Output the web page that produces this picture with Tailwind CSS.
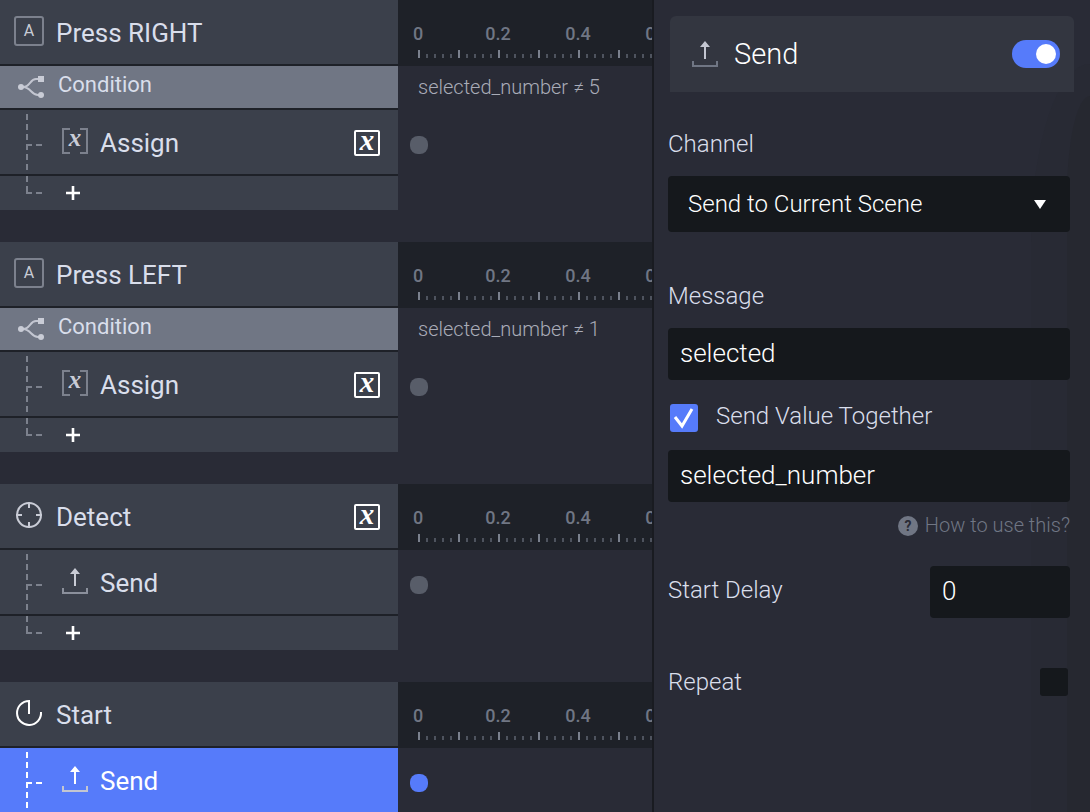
<!DOCTYPE html>
<html lang="en">
<head>
    <meta charset="UTF-8">
    <meta name="viewport" content="width=device-width, initial-scale=1.0">
    <title>Interaction Editor</title>
    <script src="https://cdn.jsdelivr.net/npm/@tailwindcss/browser@4"></script>
</head>
<body class="bg-[#292b36] font-['Roboto',sans-serif] text-[#d9deeb]">

    <!-- shared icons -->
    <svg class="hidden">
        <symbol id="icon-key" viewBox="0 0 30 34">
            <rect x="1" y="1" width="28" height="28" rx="2" fill="none" stroke="#7c818d" stroke-width="2"/>
            <text x="15" y="20" text-anchor="middle" font-size="16" fill="#c9ccd6">A</text>
        </symbol>
        <symbol id="icon-detect" viewBox="0 0 30 34">
            <g fill="none" stroke="#c9ccd6" stroke-width="2">
                <circle cx="15" cy="15" r="12"/>
                <path d="M15 2v6M15 22v6M2 15h6M22 15h6"/>
            </g>
        </symbol>
        <symbol id="icon-start" viewBox="0 0 30 34">
            <path d="M27 14A12 12 0 1 1 15 3V16" fill="none" stroke="#fff" stroke-width="2"/>
        </symbol>
        <symbol id="icon-condition" viewBox="0 0 26 22">
            <path d="M3 11h2c7 0 7-8 13-8h4M3 11h2c8 0 8 8 15 8h3" fill="none" stroke="#c3c6d1" stroke-width="2"/>
            <circle cx="3" cy="11" r="3" fill="#c9ccd6"/>
            <rect x="20" y="0" width="6" height="6" fill="#c9ccd6"/>
            <circle cx="23" cy="19" r="3" fill="#c9ccd6"/>
        </symbol>
        <symbol id="icon-assign" viewBox="0 0 26 30">
            <path d="M8 1H1v24h7M18 1h7v24h-7" fill="none" stroke="#7c818d" stroke-width="2"/>
            <text x="13" y="18" text-anchor="middle" font-family="Liberation Serif, serif" font-style="italic" font-weight="700" font-size="25" fill="#c9ccd6">x</text>
        </symbol>
        <symbol id="icon-send" viewBox="0 0 26 30">
            <path d="M13 0l5 6h-4v12h-2V6H8z" fill="currentColor"/>
            <path d="M1 20v5h24v-5" fill="none" stroke="var(--tray)" stroke-width="2"/>
        </symbol>
        <symbol id="icon-var" viewBox="0 0 26 26">
            <rect x="1" y="1" width="24" height="24" rx="1" fill="none" stroke="#fff" stroke-width="2"/>
            <text x="13" y="20" text-anchor="middle" font-family="Liberation Serif, serif" font-style="italic" font-weight="700" font-size="29" fill="#fff">x</text>
        </symbol>
        <symbol id="icon-plus" viewBox="0 0 14 14">
            <path d="M7 0v14M0 7h14" stroke="#fff" stroke-width="2.6"/>
        </symbol>
        <symbol id="tree-branch" viewBox="0 0 16 64">
            <path d="M1 4V60" stroke="currentColor" stroke-width="2" stroke-dasharray="6 4"/>
            <path d="M1 35h5M10 35h6" stroke="currentColor" stroke-width="2"/>
        </symbol>
        <symbol id="tree-end" viewBox="0 0 16 34">
            <path d="M1 0v6M1 10v7h5M10 17h6" fill="none" stroke="currentColor" stroke-width="2"/>
        </symbol>
    </svg>
    <!-- a pattern does not paint from a display:none svg, so it has its own -->
    <svg class="absolute size-0">
        <pattern id="ticks" width="40" height="8" patternUnits="userSpaceOnUse">
            <path d="M1 0v8" stroke="#7b818e" stroke-width="2"/>
            <path d="M9 4v4M17 4v4M25 4v4M33 4v4" stroke="#4e535e" stroke-width="2"/>
        </pattern>
    </svg>

    <div class="flex min-h-screen">

        <!-- triggers and timeline -->
        <main class="flex min-w-0 flex-1 flex-col gap-8 overflow-hidden">

            <section>
                <div class="flex">
                    <div class="flex h-[66px] w-[398px] shrink-0 items-center border-b-2 border-[#1e2128] bg-[#3b404b] pt-[2px] pr-[18px] pl-[14px]">
                        <svg class="h-[34px] w-[30px]"><use href="#icon-key"/></svg>
                        <h2 class="ml-3 flex-1 text-[26px]">Press RIGHT</h2>
                    </div>
                    <div class="flex min-w-0 flex-1 flex-col overflow-hidden bg-[#1e2128] pt-[22px]">
                        <div class="flex text-center text-[18px] leading-6 font-medium text-[#707684]">
                            <span class="w-10 shrink-0">0</span><span class="ml-5 w-20 shrink-0">0.2</span><span class="w-20 shrink-0">0.4</span><span class="w-20 shrink-0">0.6</span>
                        </div>
                        <svg class="mt-1 ml-5 h-2 w-full"><rect width="100%" height="8" fill="url(#ticks)"/></svg>
                    </div>
                </div>
                <div class="flex">
                    <div class="flex h-11 w-[398px] shrink-0 items-center border-b-2 border-[#1e2128] bg-[#707684] pl-[18px]">
                        <svg class="h-[22px] w-[26px]"><use href="#icon-condition"/></svg>
                        <h3 class="ml-[14px] pb-[6px] text-[22px]">Condition</h3>
                    </div>
                    <p class="flex h-11 flex-1 items-center pb-[2px] pl-5 text-[20px] font-light whitespace-nowrap text-[#a9acb8]">selected_number ≠ 5</p>
                </div>
                <div class="flex">
                    <div class="flex h-[66px] w-[398px] shrink-0 items-center border-b-2 border-[#1e2128] bg-[#3b404b] pr-[18px] pl-[26px]">
                        <svg class="h-16 w-4 text-[#7c818d]"><use href="#tree-branch"/></svg>
                        <svg class="mt-[2px] ml-5 h-[30px] w-[26px]"><use href="#icon-assign"/></svg>
                        <span class="mt-[2px] ml-3 flex-1 text-[26px]">Assign</span>
                        <svg class="mt-[2px] size-[26px]"><use href="#icon-var"/></svg>
                    </div>
                    <div class="flex flex-1 items-center pt-1 pl-3"><i class="size-[18px] rounded-[8px] bg-[#585d69]"></i></div>
                </div>
                <div class="flex h-[34px] w-[398px] items-center bg-[#3b404b] pl-[26px]">
                    <svg class="h-[34px] w-4 text-[#7c818d]"><use href="#tree-end"/></svg>
                    <button type="button" aria-label="Add action" class="ml-6"><svg class="size-[14px]"><use href="#icon-plus"/></svg></button>
                </div>
            </section>

            <section>
                <div class="flex">
                    <div class="flex h-[66px] w-[398px] shrink-0 items-center border-b-2 border-[#1e2128] bg-[#3b404b] pt-[2px] pr-[18px] pl-[14px]">
                        <svg class="h-[34px] w-[30px]"><use href="#icon-key"/></svg>
                        <h2 class="ml-3 flex-1 text-[26px]">Press LEFT</h2>
                    </div>
                    <div class="flex min-w-0 flex-1 flex-col overflow-hidden bg-[#1e2128] pt-[22px]">
                        <div class="flex text-center text-[18px] leading-6 font-medium text-[#707684]">
                            <span class="w-10 shrink-0">0</span><span class="ml-5 w-20 shrink-0">0.2</span><span class="w-20 shrink-0">0.4</span><span class="w-20 shrink-0">0.6</span>
                        </div>
                        <svg class="mt-1 ml-5 h-2 w-full"><rect width="100%" height="8" fill="url(#ticks)"/></svg>
                    </div>
                </div>
                <div class="flex">
                    <div class="flex h-11 w-[398px] shrink-0 items-center border-b-2 border-[#1e2128] bg-[#707684] pl-[18px]">
                        <svg class="h-[22px] w-[26px]"><use href="#icon-condition"/></svg>
                        <h3 class="ml-[14px] pb-[6px] text-[22px]">Condition</h3>
                    </div>
                    <p class="flex h-11 flex-1 items-center pb-[2px] pl-5 text-[20px] font-light whitespace-nowrap text-[#a9acb8]">selected_number ≠ 1</p>
                </div>
                <div class="flex">
                    <div class="flex h-[66px] w-[398px] shrink-0 items-center border-b-2 border-[#1e2128] bg-[#3b404b] pr-[18px] pl-[26px]">
                        <svg class="h-16 w-4 text-[#7c818d]"><use href="#tree-branch"/></svg>
                        <svg class="mt-[2px] ml-5 h-[30px] w-[26px]"><use href="#icon-assign"/></svg>
                        <span class="mt-[2px] ml-3 flex-1 text-[26px]">Assign</span>
                        <svg class="mt-[2px] size-[26px]"><use href="#icon-var"/></svg>
                    </div>
                    <div class="flex flex-1 items-center pt-1 pl-3"><i class="size-[18px] rounded-[8px] bg-[#585d69]"></i></div>
                </div>
                <div class="flex h-[34px] w-[398px] items-center bg-[#3b404b] pl-[26px]">
                    <svg class="h-[34px] w-4 text-[#7c818d]"><use href="#tree-end"/></svg>
                    <button type="button" aria-label="Add action" class="ml-6"><svg class="size-[14px]"><use href="#icon-plus"/></svg></button>
                </div>
            </section>

            <section>
                <div class="flex">
                    <div class="flex h-[66px] w-[398px] shrink-0 items-center border-b-2 border-[#1e2128] bg-[#3b404b] pt-[2px] pr-[18px] pl-[14px]">
                        <svg class="h-[34px] w-[30px]"><use href="#icon-detect"/></svg>
                        <h2 class="ml-3 flex-1 text-[26px]">Detect</h2>
                        <svg class="size-[26px]"><use href="#icon-var"/></svg>
                    </div>
                    <div class="flex min-w-0 flex-1 flex-col overflow-hidden bg-[#1e2128] pt-[22px]">
                        <div class="flex text-center text-[18px] leading-6 font-medium text-[#707684]">
                            <span class="w-10 shrink-0">0</span><span class="ml-5 w-20 shrink-0">0.2</span><span class="w-20 shrink-0">0.4</span><span class="w-20 shrink-0">0.6</span>
                        </div>
                        <svg class="mt-1 ml-5 h-2 w-full"><rect width="100%" height="8" fill="url(#ticks)"/></svg>
                    </div>
                </div>
                <div class="flex">
                    <div class="flex h-[66px] w-[398px] shrink-0 items-center border-b-2 border-[#1e2128] bg-[#3b404b] pr-[18px] pl-[26px]">
                        <svg class="h-16 w-4 text-[#7c818d]"><use href="#tree-branch"/></svg>
                        <svg class="mt-[2px] ml-5 h-[30px] w-[26px] text-[#c9ccd6] [--tray:#8b909c]"><use href="#icon-send"/></svg>
                        <span class="mt-[2px] ml-3 flex-1 text-[26px]">Send</span>
                    </div>
                    <div class="flex flex-1 items-center pt-1 pl-3"><i class="size-[18px] rounded-[8px] bg-[#585d69]"></i></div>
                </div>
                <div class="flex h-[34px] w-[398px] items-center bg-[#3b404b] pl-[26px]">
                    <svg class="h-[34px] w-4 text-[#7c818d]"><use href="#tree-end"/></svg>
                    <button type="button" aria-label="Add action" class="ml-6"><svg class="size-[14px]"><use href="#icon-plus"/></svg></button>
                </div>
            </section>

            <section>
                <div class="flex">
                    <div class="flex h-[66px] w-[398px] shrink-0 items-center border-b-2 border-[#1e2128] bg-[#3b404b] pt-[2px] pr-[18px] pl-[14px]">
                        <svg class="h-[34px] w-[30px]"><use href="#icon-start"/></svg>
                        <h2 class="ml-3 flex-1 text-[26px]">Start</h2>
                    </div>
                    <div class="flex min-w-0 flex-1 flex-col overflow-hidden bg-[#1e2128] pt-[22px]">
                        <div class="flex text-center text-[18px] leading-6 font-medium text-[#707684]">
                            <span class="w-10 shrink-0">0</span><span class="ml-5 w-20 shrink-0">0.2</span><span class="w-20 shrink-0">0.4</span><span class="w-20 shrink-0">0.6</span>
                        </div>
                        <svg class="mt-1 ml-5 h-2 w-full"><rect width="100%" height="8" fill="url(#ticks)"/></svg>
                    </div>
                </div>
                <!-- selected action -->
                <div class="flex">
                    <div class="flex h-16 w-[398px] shrink-0 items-center bg-[#567bfa] pr-[18px] pl-[26px] text-white">
                        <svg class="h-16 w-4"><use href="#tree-branch"/></svg>
                        <svg class="mt-[2px] ml-5 h-[30px] w-[26px] [--tray:#c3c6d1]"><use href="#icon-send"/></svg>
                        <span class="mt-[2px] ml-3 flex-1 text-[26px]">Send</span>
                    </div>
                    <div class="flex flex-1 items-center pt-[6px] pl-3"><i class="size-[18px] rounded-[8px] bg-[#567bfa]"></i></div>
                </div>
            </section>
        </main>

        <!-- properties of the selected action -->
        <aside class="relative w-[438px] shrink-0 overflow-hidden border-l-2 border-[#191b21] font-light">
            <div class="absolute top-16 right-0 bottom-0 w-[59px] rounded-tl-[59px_180px] bg-[#282a34]"></div>
            <div class="absolute top-24 right-0 bottom-0 w-[23px] rounded-tl-[23px_100px] bg-[#262830]"></div>

            <div class="relative mx-4 mt-4 flex h-[76px] items-center rounded-t-[6px] bg-[#333640] pr-[14px] pl-[22px]">
                <svg class="mt-1 h-[30px] w-[26px] text-[#c3c6d1] [--tray:#707684]"><use href="#icon-send"/></svg>
                <h1 class="ml-4 flex-1 pt-[2px] text-[29px] text-white">Send</h1>
                <input type="checkbox" role="switch" aria-label="Enabled" checked class="h-7 w-12 appearance-none rounded-full bg-[#4a4f5b] p-1 before:block before:size-5 before:rounded-full before:bg-white checked:bg-[#567bfa] checked:before:ml-5">
            </div>

            <form class="relative pr-5 pl-[14px] text-[24px] leading-8">
                <label for="channel" class="mt-9 block">Channel</label>
                <div class="relative mt-4">
                    <select id="channel" class="h-14 w-full appearance-none rounded-[4px] bg-[#15181c] px-5 text-white">
                        <option>Send to Current Scene</option>
                    </select>
                    <svg class="pointer-events-none absolute top-6 right-6 h-[9px] w-3" viewBox="0 0 12 9"><path d="M0 0h12L6 9z" fill="#fff"/></svg>
                </div>

                <label for="message" class="mt-12 block">Message</label>
                <input id="message" type="text" value="selected" class="mt-4 block h-[52px] w-full rounded-[4px] bg-[#15181c] px-3 pb-[2px] text-[26px] text-white">

                <div class="relative mt-6 flex h-7 items-center pl-[2px]">
                    <input id="with-value" type="checkbox" checked class="peer size-7 appearance-none rounded-[3px] bg-[#15181c] checked:bg-[#567bfa]">
                    <svg class="pointer-events-none absolute left-[2px] hidden size-7 peer-checked:block" viewBox="0 0 28 28"><path d="M5 13l7 9L22 5" fill="none" stroke="#fff" stroke-width="3"/></svg>
                    <label for="with-value" class="ml-[18px] pb-1">Send Value Together</label>
                </div>
                <input type="text" aria-label="Value" value="selected_number" class="mt-[18px] block h-[52px] w-full rounded-[4px] bg-[#15181c] px-3 pb-[2px] text-[26px] text-white">

                <a href="#" class="mt-2 flex h-8 items-center justify-end pb-[2px] text-[20px] text-[#707684]">
                    <svg class="mt-[2px] mr-[7px] size-5" viewBox="0 0 20 20"><circle cx="10" cy="10" r="10" fill="#707684"/><text x="10" y="15" text-anchor="middle" font-size="14" font-weight="700" fill="#292b36">?</text></svg>
                    How to use this?
                </a>

                <div class="mt-6 flex items-center justify-between">
                    <label for="delay" class="pb-1">Start Delay</label>
                    <input id="delay" type="text" value="0" class="h-[52px] w-[140px] rounded-[4px] bg-[#15181c] px-3 pb-[2px] text-[26px] text-white">
                </div>

                <div class="mt-[50px] flex h-7 items-center justify-between pr-[2px]">
                    <label for="repeat">Repeat</label>
                    <input id="repeat" type="checkbox" class="size-7 appearance-none rounded-[3px] bg-[#15181c] checked:bg-[#567bfa]">
                </div>
            </form>
        </aside>
    </div>
</body>
</html>
